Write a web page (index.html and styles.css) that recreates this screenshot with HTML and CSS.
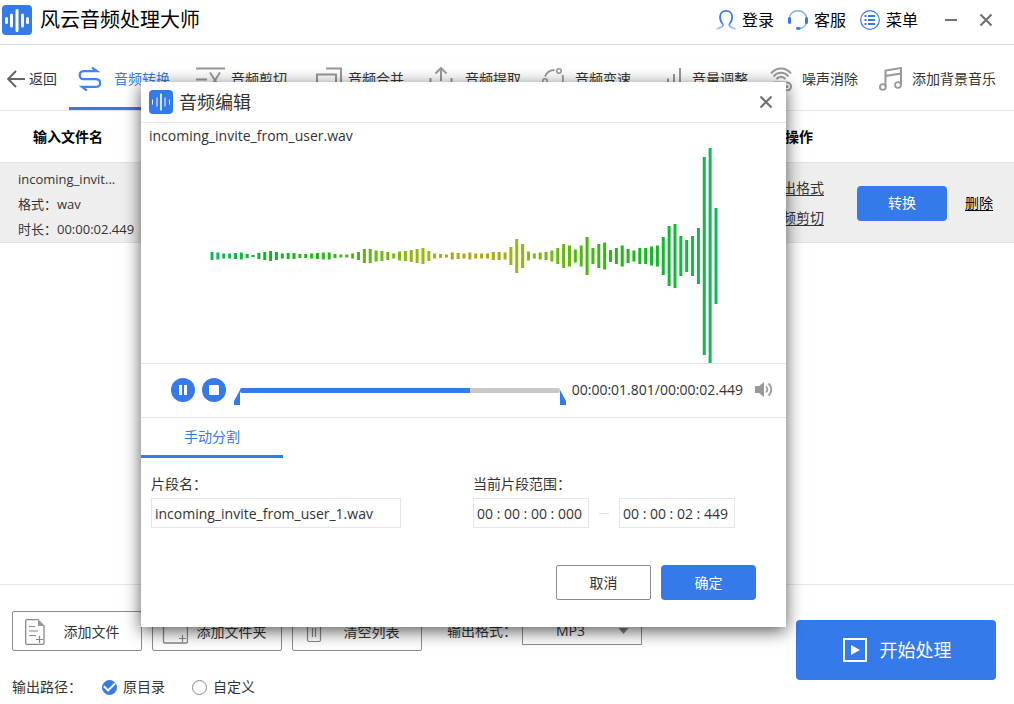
FILE: index.html
```html
<!DOCTYPE html>
<html lang="zh-CN">
<head>
<meta charset="utf-8">
<title>风云音频处理大师</title>
<link rel="stylesheet" href="styles.css">
</head>
<body>
<div class="app">
  <header class="titlebar">
    <svg class="logo" viewBox="0 0 30 30"><rect width="30" height="30" rx="4" fill="#357aeb"/><path d="M4.500 13.500v4M9.500 10v11M15 5.500v20M20.500 10v11M25.500 13.500v4" stroke="#fff" stroke-width="3" stroke-linecap="round"/></svg>
    <h1 class="app-name">风云音频处理大师</h1>
    <div class="account">
      <button class="account-btn"><svg class="icon-20" viewBox="0 0 20 20"><defs><linearGradient id="fade" x1="0" y1="0" x2="0" y2="1"><stop offset=".6" stop-color="#357aeb"/><stop offset="1" stop-color="#b5d0fa"/></linearGradient></defs><path d="M.5 19.200c2.500-1.200 6.500-2 6.500-4.200 0-1.400-3-3-3-7.800C4 3.500 6.300.9 10.100.9s6.100 2.600 6.100 6.300c0 4.800-3 6.400-3 7.800 0 2.200 4 3 6.500 4.200" fill="none" stroke="url(#fade)" stroke-width="1.800"/></svg>登录</button>
      <button class="account-btn"><svg class="icon-20" viewBox="0 0 20 20"><path d="M1.500 8C1.800 3.500 5.500.8 10 .8S18.200 3.500 18.500 8M18.200 13c-.5 3-3 5-6 5.500" fill="none" stroke="#7eabf3" stroke-width="1.400"/><path d="M1.500 8.500v4M18.500 8.500v4" stroke="#357aeb" stroke-width="3" stroke-linecap="round"/><ellipse cx="10.300" cy="18.500" rx="2.500" ry="1.400" fill="#357aeb"/></svg>客服</button>
      <button class="account-btn"><svg class="icon-20" viewBox="0 0 20 20"><circle cx="10" cy="10" r="9.300" fill="none" stroke="#357aeb" stroke-width="1.200"/><path d="M4.500 6h2M4.500 10h2M4.500 14h2M8 6h7M8 10h7M8 14h7" stroke="#357aeb" stroke-width="1.800"/></svg>菜单</button>
    </div>
    <button class="window-btn" aria-label="最小化"><svg class="icon-14" viewBox="0 0 14 14"><path d="M1 7h12" stroke="#707279" stroke-width="2"/></svg></button>
    <button class="window-btn" aria-label="关闭"><svg class="icon-14" viewBox="0 0 14 14"><path d="M1.500 1.500l11 11M12.500 1.500l-11 11" stroke="#707279" stroke-width="2.200"/></svg></button>
  </header>

  <nav class="toolbar">
    <button class="back"><svg class="icon-back" viewBox="0 0 18 18"><path d="M18 9H1.500M9 1L1.200 9 9 17" fill="none" stroke="#666" stroke-width="2"/></svg>返回</button>
    <div class="tabs">
      <button class="tab tab-active"><svg class="icon-tab" viewBox="0 0 30 24"><path d="M14 .5l5 3.700H6.500C3 4.200 1.700 6.200 1.700 8.200S3 12.100 6 12.100h11.500c3 0 4.700 1.500 4.700 3.800s-1.700 4-4.700 4H4l5 3.700" fill="none" stroke="#4084f0" stroke-width="2.200"/></svg>音频转换</button>
      <button class="tab"><svg class="icon-tab" viewBox="0 0 30 24"><path d="M1 1.500h29M1 12.500h11" stroke="#999" stroke-width="2"/><path d="M15 5.500l9 14M25 5.500l-9 14" stroke="#999" stroke-width="2"/></svg>音频剪切</button>
      <button class="tab"><svg class="icon-tab" viewBox="-2 0 30 24"><path d="M12 1.500h15V16M3 24V7.500h19V24" fill="none" stroke="#999" stroke-width="2"/></svg>音频合并</button>
      <button class="tab"><svg class="icon-tab" viewBox="3 0 30 24"><path d="M15 14V1.500M9.500 6.500L15 1l5.500 5.500M4.500 11v11h21V11" fill="none" stroke="#999" stroke-width="2"/></svg>音频提取</button>
      <button class="tab tab-narrow"><svg class="icon-tab" viewBox="3 0 23 24"><circle cx="20" cy="4" r="2.200" fill="none" stroke="#999" stroke-width="1.600"/><circle cx="6" cy="14" r="2.200" fill="none" stroke="#999" stroke-width="1.600"/><path d="M6 9.500C7.500 6 11 3 15.500 3M23.500 8c1.500 4 .5 9-4 12" fill="none" stroke="#999" stroke-width="1.800"/></svg>音频变速</button>
      <button class="tab"><svg class="icon-tab" viewBox="-4 0 30 24"><path d="M2 15v8M8 11.500V23M14 7v16M20 1v22" stroke="#999" stroke-width="2"/></svg>音量调整</button>
      <button class="tab tab-narrow"><svg class="icon-tab" viewBox="1 0 23 24"><path d="M3 6.500C8-.3 18-.3 23 6.500M5.500 9.500c4-5 11-5 15 0M8.500 12c2.500-3 6.500-3 9 0" fill="none" stroke="#999" stroke-width="2"/><rect x="3" y="15.500" width="20" height="8" rx="4" fill="none" stroke="#999" stroke-width="2"/><circle cx="19" cy="19.500" r="1.500" fill="#999"/></svg>噪声消除</button>
      <button class="tab tab-narrow"><svg class="icon-tab" viewBox="1 0 23 24"><path d="M7.500 20V3.500L23 1v17M7.500 9L23 6.500" fill="none" stroke="#999" stroke-width="2"/><circle cx="4.800" cy="20" r="2.900" fill="none" stroke="#999" stroke-width="1.800"/><circle cx="20" cy="18" r="2.900" fill="none" stroke="#999" stroke-width="1.800"/></svg>添加背景音乐</button>
    </div>
  </nav>

  <main class="files">
    <table class="file-table">
      <thead>
        <tr><th class="col-name">输入文件名</th><th></th><th class="col-actions">操作</th></tr>
      </thead>
      <tbody>
        <tr>
          <td class="file-info"><div>incoming_invit...</div><div>格式：wav</div><div>时长：00:00:02.449</div></td>
          <td></td>
          <td>
            <div class="actions">
              <div class="action-links"><a href="#format">输出格式</a><a href="#cut">音频剪切</a></div>
              <button class="primary convert">转换</button>
              <a class="delete" href="#delete">删除</a>
            </div>
          </td>
        </tr>
      </tbody>
    </table>
  </main>

  <footer class="footer">
    <div class="options">
      <div class="option-row option-main">
        <button class="outline"><svg class="icon-file" viewBox="0 0 26 26"><path d="M17 .7H4.700Q3.700.7 3.700 1.700v22.600q0 1 1 1H21q1 0 1-1V6.500" fill="none" stroke="#888" stroke-width="1.300"/><path d="M16 0l7 7h-7z" fill="#999"/><path d="M7 7.500h6M7 12h9M7 16.500h7M14 20.500h7M17.500 17v7" stroke="#888" stroke-width="1.200"/></svg><span class="outline-text">添加文件</span></button>
        <button class="outline"><svg class="icon-file" viewBox="0 0 26 26"><path d="M1.500 3h9l3 4h12v16q0 1-1 1h-22q-1 0-1-1z" fill="none" stroke="#888" stroke-width="1.300"/><path d="M17 19.500h7M20.500 16v7" stroke="#888" stroke-width="1.200"/></svg><span class="outline-text">添加文件夹</span></button>
        <button class="outline"><svg class="icon-file" viewBox="0 0 26 26"><path d="M2 5h20M8 5V1h8v4M5.500 5v16q0 1.500 1.500 1.500h10q1.500 0 1.500-1.500V5M10.500 9v9M13.500 9v9" fill="none" stroke="#888" stroke-width="1.200"/></svg><span class="outline-text">清空列表</span></button>
        <label class="format-label" for="format">输出格式：</label>
        <div class="select-wrap">
          <select class="format" id="format"><option>MP3</option><option>WAV</option></select>
          <svg class="caret" viewBox="0 0 10 6"><path d="M0 0h10L5 6z" fill="#808080"/></svg>
        </div>
      </div>
      <div class="option-row option-path">
        <span class="path-label">输出路径：</span>
        <label class="radio"><input type="radio" name="path" checked>原目录</label>
        <label class="radio"><input type="radio" name="path">自定义</label>
      </div>
    </div>
    <button class="primary start"><svg class="icon-start" viewBox="0 0 24 24"><rect x="1" y="1" width="22" height="22" fill="none" stroke="#fff" stroke-width="2"/><path d="M8 7l9 5-9 5z" fill="#fff"/></svg>开始处理</button>
  </footer>

  <section class="dialog" role="dialog" aria-labelledby="dialog-title">
    <header class="dialog-head">
      <svg class="dialog-logo" viewBox="0 0 24 24"><rect width="24" height="24" rx="4" fill="#357aeb"/><path d="M3.500 9.500v5M8 7.500v9M16 7.500v9M20.500 9.500v5" stroke="#fff" stroke-width="1"/><path d="M12 3.500v17" stroke="#fff" stroke-width="1.600"/></svg>
      <h2 class="dialog-title" id="dialog-title">音频编辑</h2>
      <button class="window-btn" aria-label="关闭"><svg class="icon-14" viewBox="0 0 14 14"><path d="M1.500 1.500l11 11M12.500 1.500l-11 11" stroke="#707279" stroke-width="2.200"/></svg></button>
    </header>
    <div class="file-name">incoming_invite_from_user.wav</div>
    <svg class="wave" viewBox="0 0 645 215">
      <defs>
        <linearGradient id="tone" gradientUnits="userSpaceOnUse" x1="70" y1="0" x2="577" y2="0">
          <stop offset="0" stop-color="#10b85c"/><stop offset=".12" stop-color="#10b524"/><stop offset=".23" stop-color="#2ab80e"/><stop offset=".33" stop-color="#68b80e"/><stop offset=".42" stop-color="#a0b80e"/><stop offset=".5" stop-color="#b8a00e"/><stop offset=".6" stop-color="#98b80e"/><stop offset=".7" stop-color="#60b80e"/><stop offset=".82" stop-color="#1ab80e"/><stop offset=".93" stop-color="#10b840"/><stop offset="1" stop-color="#10b85c"/>
        </linearGradient>
      </defs>
      <path class="wave-bars" id="wave-bars"/>
    </svg>
    <div class="player">
      <button class="round" aria-label="暂停"><svg class="icon-24" viewBox="0 0 24 24"><circle cx="12" cy="12" r="12" fill="#357aeb"/><path d="M9.500 7v10M14.500 7v10" stroke="#fff" stroke-width="3"/></svg></button>
      <button class="round" aria-label="停止"><svg class="icon-24" viewBox="0 0 24 24"><circle cx="12" cy="12" r="12" fill="#357aeb"/><rect x="7" y="7" width="10" height="10" rx="1" fill="#fff"/></svg></button>
      <div class="seek">
        <input class="seek-range" type="range" min="0" max="2449" value="1801" aria-label="播放进度">
        <svg class="mark mark-start" viewBox="0 0 6 15"><path d="M6 0v15H0v-4z" fill="#357aeb"/></svg>
        <svg class="mark mark-end" viewBox="0 0 6 15"><path d="M0 0v15h6v-4z" fill="#357aeb"/></svg>
      </div>
      <div class="time">00:00:01.801/00:00:02.449</div>
      <button class="round" aria-label="音量"><svg class="icon-volume" viewBox="0 0 18 16"><path d="M0 4h4l5-4v15l-5-4H0z" fill="#999"/><path d="M11 4.500c1.700 1.700 1.700 4.300 0 6M13.500 1.500c3.600 3 3.600 9 0 12" fill="none" stroke="#999" stroke-width="1.700"/></svg></button>
    </div>
    <div class="mode-tabs"><button class="mode">手动分割</button></div>
    <form class="segment">
      <div class="field">
        <label for="segment-name">片段名：</label>
        <input class="box name-box" id="segment-name" type="text" value="incoming_invite_from_user_1.wav">
      </div>
      <div class="field">
        <label for="from">当前片段范围：</label>
        <div class="range">
          <input class="box time-box" id="from" type="text" value="00 : 00 : 00 : 000">
          <span class="dash"></span>
          <input class="box time-box" type="text" aria-label="结束时间" value="00 : 00 : 02 : 449">
        </div>
      </div>
    </form>
    <div class="dialog-actions">
      <button class="cancel">取消</button>
      <button class="primary confirm">确定</button>
    </div>
  </section>
</div>
<script src="wave.js"></script>
</body>
</html>
```
FILE: styles.css
```css
* { box-sizing: border-box; }

body {
  margin: 0;
  font: 14px/20px "Open Sans", "Noto Sans CJK SC", sans-serif;
  color: #333;
  background: #fff;
}

button {
  padding: 0;
  border: 0;
  background: none;
  font: inherit;
  color: inherit;
  display: flex;
  align-items: center;
  justify-content: center;
  white-space: nowrap;
}

svg { display: block; flex: none; }
h1, h2 { margin: 0; font-weight: 400; }
a { color: inherit; text-decoration: underline; text-underline-offset: 2px; }

.app {
  position: relative;
  display: flex;
  flex-direction: column;
  min-height: 100vh;
  overflow: hidden;
}

.titlebar {
  display: flex;
  align-items: center;
  height: 45px;
  padding: 0 21px 4px 2px;
  border-bottom: 1px solid #d9d9d9;
  color: #000;
}
.logo { width: 30px; height: 30px; }
.app-name { margin-left: 8px; font-size: 20px; line-height: 30px; }
.account { display: flex; gap: 14px; margin-left: auto; margin-right: 26px; }
.account-btn { gap: 6px; font-size: 16px; line-height: 24px; }
.window-btn + .window-btn { margin-left: 21px; }
.icon-20 { width: 20px; height: 20px; }
.icon-14 { width: 14px; height: 14px; }
.icon-24 { width: 24px; height: 24px; }

.toolbar {
  display: flex;
  height: 66px;
  padding-left: 7px;
  border-bottom: 1px solid #e6e6e6;
}
.back { gap: 4px; width: 50px; padding-top: 2px; }
.icon-back { width: 18px; height: 18px; }
.tabs { display: flex; gap: 7px; margin-left: 12px; }
.tab {
  gap: 6px;
  padding: 5px 9px 0;
  border-bottom: 3px solid transparent;
}
.tab-active { color: #357aeb; border-bottom-color: #357aeb; }
.icon-tab { width: 30px; height: 24px; }
.tab-narrow { gap: 10px; padding-left: 5px; }
.tab-narrow .icon-tab { width: 23px; }

.files { flex: 1; }
.file-table {
  width: 100%;
  border-collapse: collapse;
  table-layout: fixed;
}
.file-table th { height: 51px; padding: 2px 0 0; font-weight: 700; color: #000; }
.file-table td { height: 80px; padding: 2px 0 0; background: #eee; border-top: 1px solid #e2e2e2; border-bottom: 1px solid #e2e2e2; }
.file-table .col-name { width: 136px; }
.file-table .col-actions { width: 246px; padding-left: 17px; text-align: left; }
.file-table .file-info { padding: 4px 0 0 18px; font-size: 13px; line-height: 25px; white-space: nowrap; }
.actions { display: flex; align-items: center; }
.action-links { display: flex; flex-direction: column; line-height: 30px; }
.convert { width: 90px; height: 35px; margin: 0 18px 0 33px; }
.delete { color: #000; }

.primary { border-radius: 4px; background: #357aeb; color: #fff; }

.footer {
  display: flex;
  justify-content: space-between;
  height: 120px;
  padding: 26px 18px 0 12px;
  border-top: 1px solid #e6e6e6;
}
.option-row { display: flex; align-items: center; }
.option-main { gap: 10px; }
.outline {
  width: 130px;
  height: 40px;
  padding: 1px 6px 0 9px;
  border: 1px solid #8c8c8c;
  border-radius: 2px;
}
.icon-file { width: 26px; height: 26px; }
.outline-text { flex: 1; text-align: center; }
.format-label { width: 75px; margin-left: 15px; white-space: nowrap; }
.select-wrap { position: relative; margin-left: -10px; }
.format {
  display: block;
  width: 120px;
  height: 28px;
  padding: 0 33px;
  border: 1px solid #8c8c8c;
  background: #fff;
  appearance: none;
  font: inherit;
  color: inherit;
}
.caret { position: absolute; right: 13px; top: 11px; width: 11px; height: 6px; pointer-events: none; }
.option-path { height: 20px; margin-top: 26px; }
.path-label { width: 90px; }
.radio { display: flex; align-items: center; gap: 6px; width: 90px; }
.radio input {
  appearance: none;
  width: 15px;
  height: 15px;
  margin: 0;
  border: 1px solid #888;
  border-radius: 50%;
  background: #fff;
}
.radio input:checked { display: grid; place-items: center; border-color: #357aeb; background: #357aeb; }
.radio input:checked::before {
  content: "";
  width: 9px;
  height: 5px;
  margin-bottom: 3px;
  border: solid #fff;
  border-width: 0 0 2px 2px;
  transform: rotate(-45deg);
}
.start { gap: 13px; width: 200px; height: 60px; padding-left: 2px; margin-top: 9px; font-size: 18px; }
.icon-start { width: 24px; height: 24px; }

.dialog {
  position: absolute;
  top: 82px;
  left: 141px;
  right: 228px;
  padding-bottom: 27px;
  background: #fff;
  box-shadow: 0 4px 16px rgba(0, 0, 0, .65);
}
.dialog-head {
  display: flex;
  align-items: center;
  height: 41px;
  padding: 0 13px 0 8px;
  border-bottom: 1px solid #e6e6e6;
}
.dialog-logo { width: 24px; height: 24px; }
.dialog-title { flex: 1; margin-left: 6px; font-size: 18px; line-height: 26px; }
.file-name { padding: 0 8px; line-height: 25px; }
.wave { width: 100%; height: 215px; }
.wave-bars { fill: none; stroke: url(#tone); stroke-width: 3px; }
.player {
  display: flex;
  align-items: center;
  height: 55px;
  padding: 0 13px 1px 30px;
  border: solid #e6e6e6;
  border-width: 1px 0;
}
.round + .round { margin-left: 7px; }
.seek { position: relative; flex: 1; margin: 0 6px 0 8px; padding: 0 6px; }
.seek-range {
  display: block;
  width: 100%;
  height: 5px;
  margin: 0;
  appearance: none;
  border-radius: 2px;
  background: linear-gradient(to right, #357aeb 72%, #c8c8c8 72%);
}
.seek-range::-webkit-slider-thumb { appearance: none; width: 1px; height: 5px; background: transparent; }
.mark { position: absolute; top: 2px; width: 6px; height: 15px; }
.mark-start { left: 0; }
.mark-end { right: 0; }
.time { margin-right: 12px; }
.icon-volume { width: 18px; height: 16px; }

.mode-tabs { display: flex; }
.mode { width: 142px; height: 40px; border-bottom: 3px solid #357aeb; color: #357aeb; }
.segment { display: flex; gap: 72px; padding: 16px 10px 0; }
.field { display: flex; flex-direction: column; gap: 4px; }
.box {
  height: 30px;
  padding: 0 3px;
  border: 1px solid #e6e6e6;
  font: inherit;
  color: inherit;
  background: #fff;
}
.name-box { width: 250px; }
.time-box { width: 116px; }
.range { display: flex; align-items: center; gap: 10px; }
.dash { width: 10px; height: 1px; background: #ddd; }
.dialog-actions { display: flex; justify-content: flex-end; gap: 10px; margin-top: 37px; padding-right: 30px; }
.cancel, .confirm { width: 95px; height: 35px; }
.cancel { border: 1px solid #8c8c8c; border-radius: 2px; }
```
FILE: wave.js
```js
// Bar heights of the audio waveform, left to right
const heights = [
  8, 7, 5, 5, 6, 7, 4, 2, 6, 8, 10, 8, 5, 6, 6, 4, 4, 5, 6, 7, 7, 4, 3, 3, 5, 8,
  14, 14, 11, 10, 8, 5, 9, 10, 12, 14, 16, 10, 5, 4, 3, 7, 6, 5, 7, 5, 5, 5, 8, 8, 7, 18, 34, 24, 9, 5,
  7, 8, 11, 16, 24, 21, 13, 21, 38, 16, 24, 27, 12, 16, 21, 14, 11, 16, 16, 19, 21, 38, 60, 64, 40, 32, 40, 56, 198, 216, 96
];
const first = 71;
const last = 575;
const middle = 108;
const step = (last - first) / (heights.length - 1);

document.getElementById("wave-bars").setAttribute("d", heights
  .map((h, i) => `M${first + i * step} ${middle - h / 2}v${h}`)
  .join(""));
```
